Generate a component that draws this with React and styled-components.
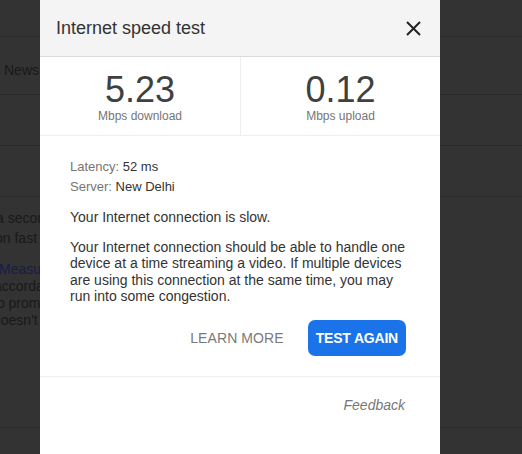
import React from "react";
import styled, { createGlobalStyle } from "styled-components";

const GlobalStyle = createGlobalStyle`
  html, body {
    margin: 0;
    padding: 0;
    background: #333;
    height: 100%;
    overflow: hidden;
  }
  body {
    font-family: "Liberation Sans", Arial, sans-serif;
  }
`;

const BackPage = styled.div`
  width: 100%;
  height: 454px;
  background: #333;
  color: #191919;
  font-size: 14px;
  overflow: hidden;
`;

const BackRow = styled.div`
  height: ${(p) => p.h}px;
  border-bottom: 1px solid #2b2b2b;
`;

const BackLabel = styled.div`
  width: 39px;
  height: 100%;
  box-sizing: border-box;
  padding-top: 8px;
  display: flex;
  align-items: center;
  justify-content: flex-end;
  white-space: nowrap;
  overflow: hidden;
`;

const BackText = styled.div`
  padding-top: ${(p) => p.top || 0}px;
  margin-left: ${(p) => p.shift || 0}px;
  line-height: ${(p) => p.lh || 17}px;
  white-space: nowrap;
  color: ${(p) => (p.link ? "#1b1b48" : "#191919")};
`;

const Modal = styled.div`
  position: fixed;
  top: 0;
  left: 40px;
  width: 400px;
  height: 100%;
  background: #fff;
  display: flex;
  flex-direction: column;
  color: #333;
`;

const Header = styled.div`
  height: 56px;
  background: #f4f4f4;
  border-bottom: 1px solid #dadada;
  display: flex;
  align-items: center;
  justify-content: space-between;
  padding: 0 18px 0 16px;
`;

const Title = styled.h1`
  margin: 0;
  font-size: 18px;
  font-weight: normal;
  color: #333;
`;

const CloseButton = styled.button`
  border: none;
  background: none;
  padding: 0;
  width: 18px;
  height: 18px;
  display: flex;
  align-items: center;
  justify-content: center;
  cursor: pointer;
`;

const Stats = styled.div`
  display: grid;
  grid-template-columns: 1fr 1fr;
  height: 78px;
  border-bottom: 1px solid #eee;
`;

const Stat = styled.div`
  display: flex;
  flex-direction: column;
  align-items: center;
  justify-content: center;
  border-left: ${(p) => (p.divided ? "1px solid #eee" : "none")};
`;

const StatValue = styled.div`
  font-size: 36px;
  line-height: 38px;
  color: #404040;
  margin-top: 2px;
`;

const StatLabel = styled.div`
  font-size: 12px;
  color: #757575;
  line-height: 14px;
`;

const Body = styled.div`
  padding: 21px 30px 0 30px;
  border-bottom: 1px solid #eee;
`;

const InfoLine = styled.div`
  font-size: 13px;
  line-height: 20px;
  color: #333;
`;

const InfoLabel = styled.span`
  color: #757575;
`;

const Status = styled.p`
  margin: 10px 0 0;
  font-size: 14px;
  line-height: 20px;
`;

const Description = styled.p`
  margin: 12px 0 0;
  font-size: 14px;
  line-height: 16.4px;
`;

const Actions = styled.div`
  display: flex;
  justify-content: flex-end;
  align-items: center;
  gap: 24px;
  padding: 15px 4px 20px 0;
`;

const TextButton = styled.button`
  border: none;
  background: none;
  font-family: inherit;
  font-size: 14px;
  color: #7a7a7a;
  padding: 0;
  letter-spacing: 0.1px;
`;

const PrimaryButton = styled.button`
  border: none;
  background: #1a73e8;
  color: #fff;
  font-family: inherit;
  font-size: 14px;
  font-weight: bold;
  height: 36px;
  padding: 0 8px;
  border-radius: 7px;
  letter-spacing: -0.2px;
`;

const Footer = styled.div`
  display: flex;
  justify-content: flex-end;
  padding: 20px 35px 0 0;
`;

const FeedbackLink = styled.a`
  font-size: 14px;
  font-style: italic;
  color: #777;
  text-decoration: none;
`;

const App = () => {
  return (
    <>
      <GlobalStyle />
      <BackPage>
        <BackRow h={36} />
        <BackRow h={57}>
          <BackLabel>Local News</BackLabel>
        </BackRow>
        <BackRow h={50} />
        <BackRow h={50} />
        <BackText top={11} lh={20} shift={-4}>
          a second
        </BackText>
        <BackText lh={20} shift={-5}>
          on fast c
        </BackText>
        <BackText top={13} link shift={-1}>
          Measure
        </BackText>
        <BackText shift={-6}>accordance</BackText>
        <BackText shift={-7}>to promote</BackText>
        <BackText shift={-7}>doesn't</BackText>
        <BackRow h={98} />
      </BackPage>
      <Modal>
        <Header>
          <Title>Internet speed test</Title>
          <CloseButton aria-label="Close">
            <svg width="15" height="15" viewBox="0 0 15 15">
              <path
                d="M1 1 L14 14 M14 1 L1 14"
                stroke="#222"
                strokeWidth="2"
                fill="none"
              />
            </svg>
          </CloseButton>
        </Header>
        <Stats>
          <Stat>
            <StatValue>5.23</StatValue>
            <StatLabel>Mbps download</StatLabel>
          </Stat>
          <Stat divided>
            <StatValue>0.12</StatValue>
            <StatLabel>Mbps upload</StatLabel>
          </Stat>
        </Stats>
        <Body>
          <InfoLine>
            <InfoLabel>Latency:</InfoLabel> 52 ms
          </InfoLine>
          <InfoLine>
            <InfoLabel>Server:</InfoLabel> New Delhi
          </InfoLine>
          <Status>Your Internet connection is slow.</Status>
          <Description>
            Your Internet connection should be able to handle one device at a
            time streaming a video. If multiple devices are using this
            connection at the same time, you may run into some congestion.
          </Description>
          <Actions>
            <TextButton>LEARN MORE</TextButton>
            <PrimaryButton>TEST AGAIN</PrimaryButton>
          </Actions>
        </Body>
        <Footer>
          <FeedbackLink href="#">Feedback</FeedbackLink>
        </Footer>
      </Modal>
    </>
  );
};

export default App;
